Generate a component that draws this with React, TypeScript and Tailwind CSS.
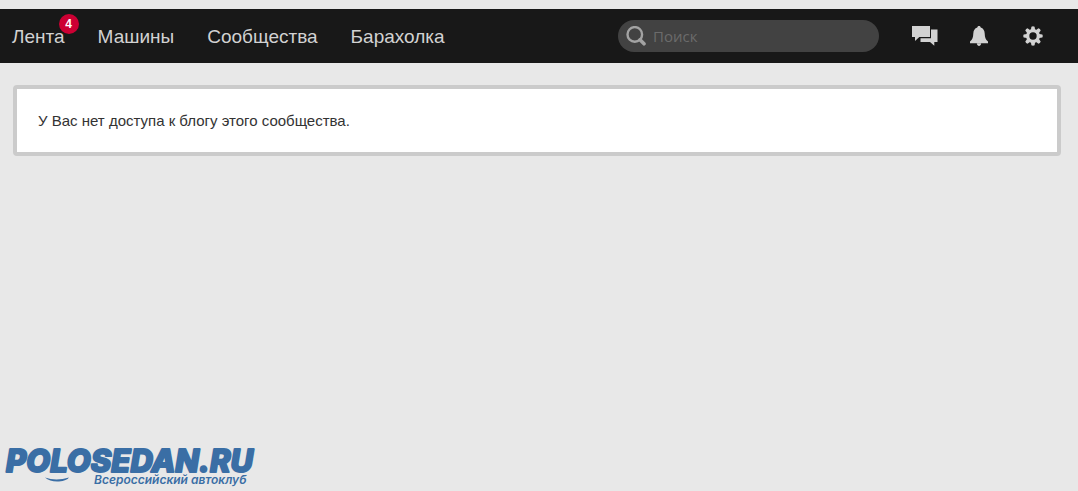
import React from "react";

const navItems = [
    { label: "Лента", href: "#feed", count: 4 },
    { label: "Машины", href: "#cars" },
    { label: "Сообщества", href: "#communities" },
    { label: "Барахолка", href: "#market" },
];

function SearchIcon() {
    return (
        <svg className="w-5 h-5 shrink-0" viewBox="0 0 20 20" fill="none" stroke="#a3a3a3" aria-hidden="true">
            <circle cx="8.8" cy="8.4" r="7.3" strokeWidth="2.4" />
            <path d="M14 13.8 L18 17.8" strokeWidth="3.6" strokeLinecap="round" />
        </svg>
    );
}

function ChatIcon() {
    return (
        <svg width="26" height="20" viewBox="0 0 26 20" fill="#d2d2d2" aria-hidden="true">
            <path d="M19 3.5 H25.5 V16 H22.3 V19.8 L18 16 H8.5 V12.3 H19 Z" />
            <path d="M0 0 H18 V11 H7.3 L3 15 V11 H0 Z" />
        </svg>
    );
}

function BellIcon() {
    return (
        <svg width="20" height="20" viewBox="0 0 20 20" fill="#d2d2d2" aria-hidden="true">
            <path d="M10 0 C11 0 11.7 0.7 11.7 1.6 C14.3 2.4 15.5 4.5 15.7 7.5 C15.9 11.5 16.5 13.7 19 15.6 V17.3 H1 V15.6 C3.5 13.7 4.1 11.5 4.3 7.5 C4.5 4.5 5.7 2.4 8.3 1.6 C8.3 0.7 9 0 10 0 Z" />
            <path d="M7.8 17.3 H12.2 C12 19.2 11 19.9 10 19.9 C9 19.9 8 19.2 7.8 17.3 Z" />
        </svg>
    );
}

function GearIcon() {
    return (
        <svg width="20" height="20" viewBox="-10 -10 20 20" fill="#d2d2d2" aria-hidden="true">
            {[0, 45, 90, 135, 180, 225, 270, 315].map((angle) => (
                <path key={angle} d="M-2.1 -6 L-1.6 -9.3 Q0 -10.2 1.6 -9.3 L2.1 -6 Z" transform={`rotate(${angle})`} />
            ))}
            <circle r="5.3" fill="none" stroke="#d2d2d2" strokeWidth="3.2" />
        </svg>
    );
}

const actions = [
    { label: "Сообщения", Icon: ChatIcon },
    { label: "Уведомления", Icon: BellIcon },
    { label: "Настройки", Icon: GearIcon },
];

function Navbar() {
    return (
        <header className="mt-[9px] h-[54px] bg-[#181818] flex items-center justify-between pl-3 pr-8">
            <nav className="flex items-center gap-[33px] pt-0.5 text-[19px] leading-6 text-[#d2d2d2]">
                {navItems.map((item) => (
                    <a key={item.href} href={item.href} className="relative whitespace-nowrap hover:text-white">
                        {item.label}
                        {item.count && (
                            <span className="absolute -top-[11px] -right-[14px] w-5 h-5 rounded-full bg-[#cc0033] text-white text-xs leading-5 font-bold text-center">
                                {item.count}
                            </span>
                        )}
                    </a>
                ))}
            </nav>
            <div className="flex items-center gap-[33px]">
                <label className="flex items-center gap-[7px] w-[261px] h-8 rounded-full bg-[#424242] pl-2 pr-4">
                    <SearchIcon />
                    <input
                        type="search"
                        aria-label="Поиск"
                        placeholder="Поиск"
                        className="w-full min-w-0 bg-transparent outline-none font-['Open_Sans',sans-serif] text-[15px] leading-6 text-[#d2d2d2] placeholder:text-[#6b6b6b]"
                    />
                </label>
                <div className="flex items-center gap-7">
                    {actions.map(({ label, Icon }) => (
                        <button key={label} type="button" aria-label={label} className="w-[26px] flex justify-center">
                            <Icon />
                        </button>
                    ))}
                </div>
            </div>
        </header>
    );
}

function Logo() {
    return (
        <a href="#home" className="block w-[270px]">
            <svg className="block" width="270" height="56" viewBox="0 0 270 56" fill="#3a6ea5">
                <text
                    x="6"
                    y="37"
                    className="font-['Inter',sans-serif] text-[31px] font-extrabold italic"
                    stroke="#3a6ea5"
                    strokeWidth="2"
                    strokeLinejoin="round"
                >
                    POLOSEDAN.RU
                </text>
                <path d="M45 42.5 Q56 46.5 69 42.5 Q67 45.5 59 46.5 Q50 47 45 42.5 Z" />
                <text x="94" y="49" className="font-['Inter',sans-serif] text-xs font-semibold italic">
                    Всероссийский автоклуб
                </text>
            </svg>
        </a>
    );
}

export default function App() {
    return (
        <div className="min-h-screen flex flex-col bg-[#e8e8e8] font-['Liberation_Sans',Arial,sans-serif]">
            <Navbar />
            <main className="mt-[22px] ml-[13px] mr-[17px] rounded border-4 border-[#cbcbcb] bg-white px-[21px] py-[21px]">
                <p className="text-[15px] leading-[21px] text-[#333]">У Вас нет доступа к блогу этого сообщества.</p>
            </main>
            <footer className="mt-auto">
                <Logo />
            </footer>
        </div>
    );
}
